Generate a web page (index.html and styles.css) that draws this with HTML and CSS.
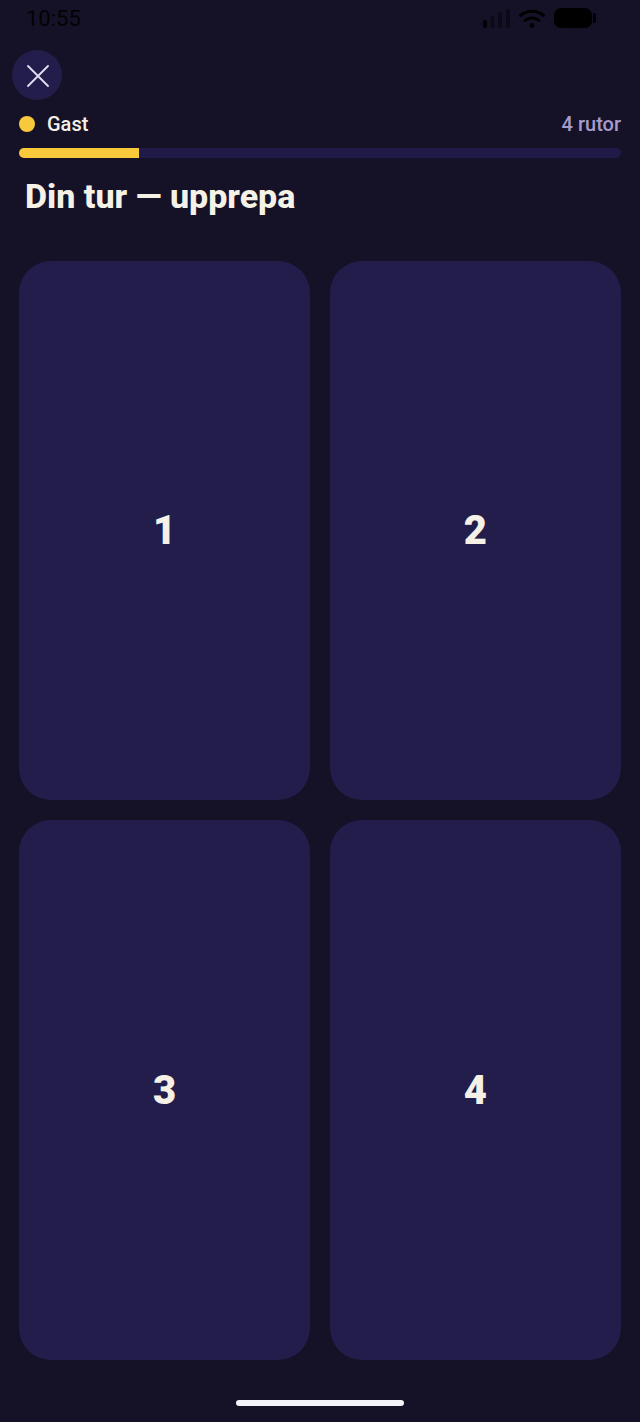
FILE: index.html
```html
<!DOCTYPE html>
<html lang="sv">
<head>
<meta charset="utf-8">
<title>Din tur</title>
<link rel="stylesheet" href="styles.css">
</head>
<body>
<div class="screen">
  <div class="status">
    <span class="time">10:55</span>
    <div class="status-icons">
      <svg class="signal" width="27" height="19" viewBox="0 0 27 19">
        <rect x="0" y="11" width="4" height="8" rx="2" fill="#000"/>
        <rect x="7.500" y="7" width="4" height="12" rx="1.500" fill="#0c0a18"/>
        <rect x="15" y="3" width="4" height="16" rx="1.500" fill="#0c0a18"/>
        <rect x="23" y="0" width="4" height="19" rx="1.500" fill="#0c0a18"/>
      </svg>
      <svg class="wifi" width="26" height="19" viewBox="0 0 26 19">
        <path d="M1.500 6.500C8 .8 18 .8 24.500 6.500M6 11.500C10 8 16 8 20 11.500" fill="none" stroke="#000" stroke-width="3" stroke-linecap="round"/>
        <circle cx="13" cy="16.500" r="2.400" fill="#000"/>
      </svg>
      <div class="battery">
        <div class="battery-body"></div>
        <div class="battery-cap"></div>
      </div>
    </div>
  </div>
  <button class="close" aria-label="Stäng">
    <svg class="close-icon" width="22" height="22" viewBox="0 0 22 22">
      <path d="M1 1L21 21M21 1L1 21" stroke="#e4def5" stroke-width="1.800" stroke-linecap="round"/>
    </svg>
  </button>
  <div class="progress-head">
    <div class="player"><span class="dot"></span><span class="name">Gast</span></div>
    <span class="count">4 rutor</span>
  </div>
  <div class="track"><div class="fill" style="width:20%"></div></div>
  <h1 class="title">Din tur — upprepa</h1>
  <div class="grid">
    <div class="cell">1</div>
    <div class="cell">2</div>
    <div class="cell">3</div>
    <div class="cell">4</div>
  </div>
  <div class="home-wrap"><div class="home"></div></div>
</div>
</body>
</html>
```
FILE: styles.css
```css
* { box-sizing: border-box; }
html, body { margin: 0; padding: 0; }
body {
  background: #151228;
  font-family: Roboto, "Liberation Sans", sans-serif;
}
.screen {
  width: 640px;
  height: 1422px;
  display: flex;
  flex-direction: column;
  overflow: hidden;
}
.status {
  height: 50px;
  flex: none;
  padding: 6px 44px 0 26px;
  display: flex;
  justify-content: space-between;
  align-items: flex-start;
}
.time {
  font-size: 22px;
  line-height: 25px;
  color: #000;
  opacity: 0.85;
}
.status-icons {
  display: flex;
  align-items: flex-start;
  gap: 9px;
  margin-top: 3px;
}
.battery { display: flex; align-items: center; gap: 1px; margin-top: -1px; }
.battery-body { width: 38px; height: 20px; background: #000; border-radius: 7px; }
.battery-cap { width: 3px; height: 10px; background: #000; border-radius: 0 2px 2px 0; }
.close {
  flex: none;
  width: 50px;
  height: 50px;
  margin-left: 12px;
  padding: 0;
  border: 0;
  border-radius: 50%;
  background: #231d4b;
  display: flex;
  align-items: center;
  justify-content: center;
}
.close-icon { margin: 2px 0 0 2px; }
.progress-head {
  flex: none;
  height: 48px;
  padding: 0 19px;
  display: flex;
  justify-content: space-between;
  align-items: center;
}
.player { display: flex; align-items: center; gap: 12px; }
.dot { width: 16px; height: 16px; border-radius: 50%; background: #f9c93c; }
.name { font-size: 20px; font-weight: 500; color: #f5f1e6; }
.count { font-size: 20px; font-weight: 500; color: #a79ccb; }
.track {
  flex: none;
  height: 10px;
  margin: 0 19px;
  border-radius: 5px;
  background: #201a48;
  overflow: hidden;
}
.fill { height: 100%; background: #f9c93c; }
.title {
  flex: none;
  margin: 0;
  height: 103px;
  padding: 19px 25px 0;
  font-size: 34px;
  line-height: 38px;
  font-weight: 800;
  color: #f5f1e6;
}
.grid {
  flex: none;
  height: 1099px;
  margin: 0 19px;
  display: grid;
  grid-template-columns: 1fr 1fr;
  grid-template-rows: 539px 540px;
  gap: 20px 19.500px;
}
.cell {
  background: #231d4b;
  border-radius: 32px;
  display: flex;
  align-items: center;
  justify-content: center;
  font-size: 40px;
  font-weight: 900;
  color: #f5f1e6;
}
.home-wrap {
  flex: 1;
  display: flex;
  justify-content: center;
  padding-top: 40px;
}
.home { width: 168px; height: 6px; border-radius: 3px; background: #f2f2f7; }
```
